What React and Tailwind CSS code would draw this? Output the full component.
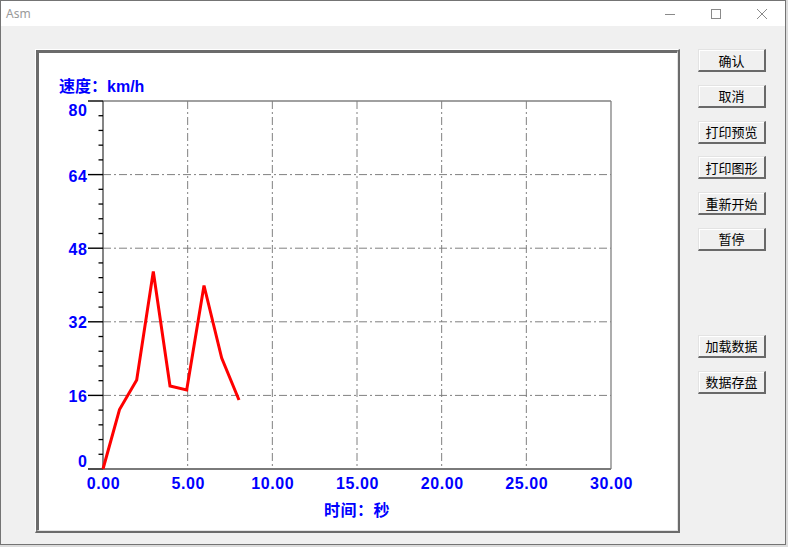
import React from "react";

const W = 638;
const H = 477;
const X0 = 103, X1 = 611, Y0 = 469, Y1 = 101;
const xs = [0, 5, 10, 15, 20, 25, 30].map((t) => X0 + ((X1 - X0) * t) / 30);
const ys = [0, 16, 32, 48, 64, 80].map((v) => Y0 - ((Y0 - Y1) * v) / 80);
const yLabels = [
  { t: "80", b: 116 },
  { t: "64", b: 181.5 },
  { t: "48", b: 254.5 },
  { t: "32", b: 328 },
  { t: "16", b: 402 },
  { t: "0", b: 467 },
];
const xLabels = ["0.00", "5.00", "10.00", "15.00", "20.00", "25.00", "30.00"];
const pts = [
  [103, 469],
  [119.5, 409.5],
  [136.7, 380],
  [153.3, 271.5],
  [170, 386],
  [186.7, 390],
  [204, 285.5],
  [221.7, 358],
  [239, 400],
];

function Chart() {
  const font = "'Liberation Sans', 'Noto Sans CJK SC', sans-serif";
  const minor = [];
  for (let i = 0; i < 5; i++) {
    for (let k = 1; k < 5; k++) {
      minor.push(ys[i] - ((ys[i] - ys[i + 1]) * k) / 5);
    }
  }
  return (
    <svg width={W} height={H} viewBox={`39 53 ${W} ${H}`} className="block">
      <rect x="39" y="53" width={W} height={H} fill="#ffffff" />
      {xs.slice(1, 6).map((x, i) => (
        <line key={"gx" + i} x1={x} y1={Y1} x2={x} y2={Y0} stroke="#808080" strokeWidth="1" strokeDasharray="8 3 2 3" />
      ))}
      {ys.slice(1, 5).map((y, i) => (
        <line key={"gy" + i} x1={X0} y1={y} x2={X1} y2={y} stroke="#808080" strokeWidth="1" strokeDasharray="8 3 2 3" />
      ))}
      <line x1={X0} y1={Y1} x2={X1} y2={Y1} stroke="#808080" strokeWidth="1.3" />
      <line x1={X1} y1={Y1} x2={X1} y2={Y0} stroke="#808080" strokeWidth="1.3" />
      <line x1={X0} y1={Y0} x2={X1} y2={Y0} stroke="#7a7a7a" strokeWidth="1.8" />
      <line x1={X0} y1={Y1} x2={X0} y2={Y0} stroke="#505050" strokeWidth="1.4" />
      {ys.map((y, i) => (
        <line key={"mt" + i} x1="88" y1={y} x2={X0} y2={y} stroke="#000" strokeWidth="1.4" />
      ))}
      {minor.map((y, i) => (
        <line key={"nt" + i} x1="98.5" y1={y} x2={X0} y2={y} stroke="#000" strokeWidth="1.3" />
      ))}
      <polyline
        points={pts.map((p) => p.join(",")).join(" ")}
        fill="none"
        stroke="#ff0000"
        strokeWidth="3"
        strokeLinejoin="miter"
      />
      <g fill="#0000ff" fontFamily={font} fontWeight="700" fontSize="16">
        <text x="59" y="92">速度：km/h</text>
        {yLabels.map((l) => (
          <text key={l.t} x="87.5" y={l.b} textAnchor="end" letterSpacing="0.6">
            {l.t}
          </text>
        ))}
        {xLabels.map((l, i) => (
          <text key={l} x={xs[i] + 0.5} y="488.5" textAnchor="middle" letterSpacing="0.6">
            {l}
          </text>
        ))}
        <text x="357" y="516" textAnchor="middle" letterSpacing="0.5">时间：秒</text>
      </g>
    </svg>
  );
}

function Btn({ children }) {
  return (
    <button className="w-[68px] h-[23px] flex items-center justify-center bg-[#f0f0f0] border-t border-l border-t-[#e3e3e3] border-l-[#e3e3e3] border-r-2 border-b-2 border-r-[#696969] border-b-[#696969] shadow-[inset_1px_1px_0_#ffffff] text-[13px] leading-none text-black font-['Noto_Sans_CJK_SC',sans-serif]">
      {children}
    </button>
  );
}

export default function App() {
  return (
    <div className="w-[788px] h-[547px] bg-[#dcdcdc]">
      <div className="w-[786px] h-[545px] flex flex-col border border-[#747474] bg-[#f0f0f0]">
        <div className="h-[25px] bg-white flex items-center">
          <span className="pl-[5px] text-[12px] text-[#9a9a9a] font-['Noto_Sans',sans-serif]">Asm</span>
          <div className="ml-auto flex h-full">
            <div className="w-[46px] h-full flex items-center justify-center">
              <svg width="10" height="10" viewBox="0 0 10 10">
                <line x1="0" y1="5.5" x2="10" y2="5.5" stroke="#8a8a8a" strokeWidth="1" />
              </svg>
            </div>
            <div className="w-[46px] h-full flex items-center justify-center">
              <svg width="10" height="10" viewBox="0 0 10 10">
                <rect x="0.5" y="0.5" width="9" height="9" fill="none" stroke="#8a8a8a" strokeWidth="1" />
              </svg>
            </div>
            <div className="w-[46px] h-full flex items-center justify-center">
              <svg width="10" height="10" viewBox="0 0 10 10">
                <line x1="0" y1="0" x2="10" y2="10" stroke="#8a8a8a" strokeWidth="1" />
                <line x1="10" y1="0" x2="0" y2="10" stroke="#8a8a8a" strokeWidth="1" />
              </svg>
            </div>
          </div>
        </div>
        <div className="flex-1 flex pt-[23px] pl-[34px]">
          <div className="w-[645px] h-[484px] border-t border-l border-t-white border-l-white border-r-2 border-b-2 border-r-[#6b6b6b] border-b-[#6b6b6b]">
            <div className="w-full h-full border-t-[3px] border-l-[3px] border-t-[#6b6b6b] border-l-[#6b6b6b] border-r border-b border-r-[#e3e3e3] border-b-[#e3e3e3] bg-white overflow-hidden">
              <Chart />
            </div>
          </div>
          <div className="ml-[18px] flex flex-col">
            <div className="flex flex-col gap-[12.8px]">
              <Btn>确认</Btn>
              <Btn>取消</Btn>
              <Btn>打印预览</Btn>
              <Btn>打印图形</Btn>
              <Btn>重新开始</Btn>
              <Btn>暂停</Btn>
            </div>
            <div className="mt-[84px] flex flex-col gap-[13px]">
              <Btn>加载数据</Btn>
              <Btn>数据存盘</Btn>
            </div>
          </div>
        </div>
      </div>
    </div>
  );
}
